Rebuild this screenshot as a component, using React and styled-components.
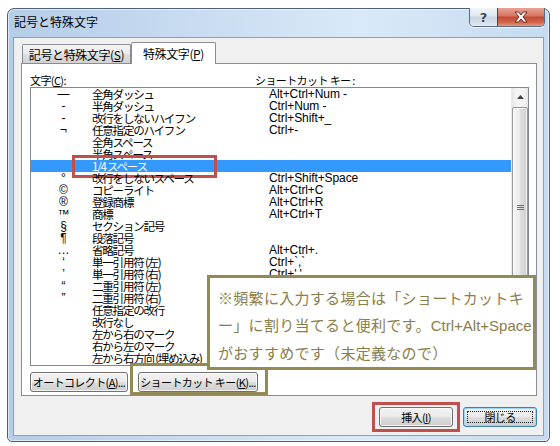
import React from 'react';
import styled, { createGlobalStyle } from 'styled-components';

const Global = createGlobalStyle`
  html, body { margin: 0; padding: 0; background: #fff; }
  body { font-family: "Liberation Sans", "Noto Sans CJK JP", sans-serif; color: #000; }
  * { box-sizing: border-box; }
`;

const JP = `"Noto Sans CJK JP", "Liberation Sans", sans-serif`;
const UI = `"Liberation Sans", "Noto Sans CJK JP", sans-serif`;

const Page = styled.div`
  position: relative;
  width: 560px;
  height: 446px;
  overflow: hidden;
  padding: 8px 0 0 7px;
`;

const Window = styled.div`
  width: 543px;
  height: 434px;
  border: 1px solid #4d6078;
  border-radius: 7px 7px 5px 5px;
  background: linear-gradient(to right, #b4cde8 0%, #c9dcf1 35%, #d9e9f8 65%, #c6dbf0 100%);
  box-shadow: inset 0 0 0 1px rgba(255, 255, 255, 0.55);
  display: flex;
  flex-direction: column;
  padding: 0 5px 5px 5px;
`;

const TitleBar = styled.div`
  height: 28px;
  display: flex;
  align-items: flex-start;
  flex-shrink: 0;
`;

const Title = styled.div`
  margin: 5px 0 0 1px;
  font-family: ${JP};
  font-size: 12px;
  line-height: 16px;
  color: #000;
`;

const CaptionGroup = styled.div`
  margin: -1px -1px 0 auto;
  display: flex;
  height: 19px;
  border: 1px solid #5a6a80;
  border-top: none;
  border-radius: 0 0 5px 5px;
  overflow: hidden;
  box-shadow: 0 1px 0 rgba(255, 255, 255, 0.7);
`;

const CaptionButton = styled.div`
  width: ${(p) => p.$w}px;
  height: 100%;
  display: flex;
  align-items: center;
  justify-content: center;
  background: ${(p) =>
    p.$close
      ? 'linear-gradient(#e8a493 0%, #d6735f 45%, #c04a32 50%, #d2664d 80%, #e49a7f 100%)'
      : 'linear-gradient(#f1f5fa 0%, #dfe7f1 45%, #c8d4e3 50%, #d4dfeb 80%, #e3ebf4 100%)'};
  border-left: ${(p) => (p.$close ? '1px solid #6b3a33' : 'none')};
  font-family: "DejaVu Sans", sans-serif;
  font-weight: bold;
  font-size: 13px;
  color: #3a4555;
  text-shadow: 0 0 2px #fff;
`;

const Client = styled.div`
  flex: 1;
  background: #f0f0f0;
  border: 1px solid #8f9fb4;
  padding: 4px 6px 8px 7px;
  display: flex;
  flex-direction: column;
`;

const TabStrip = styled.div`
  height: 21px;
  display: flex;
  align-items: flex-end;
  padding-left: 1px;
  flex-shrink: 0;
`;

const Tab = styled.div`
  position: relative;
  z-index: ${(p) => (p.$active ? 1 : 0)};
  width: ${(p) => p.$w}px;
  height: ${(p) => (p.$active ? 22 : 19)}px;
  margin-bottom: ${(p) => (p.$active ? -1 : 0)}px;
  border: 1px solid #898c95;
  border-bottom: none;
  border-radius: 2px 2px 0 0;
  background: ${(p) =>
    p.$active ? '#ffffff' : 'linear-gradient(#f4f4f4 0%, #ebebeb 50%, #dedede 52%, #d2d2d2 100%)'};
  display: flex;
  align-items: center;
  justify-content: center;
  font-family: ${JP};
  font-size: 12px;
  letter-spacing: -0.4px;
  line-height: 14px;
  padding-top: ${(p) => (p.$active ? 0 : 1)}px;
`;

const Key = styled.span`
  text-decoration: underline;
`;

const Panel = styled.div`
  width: 516px;
  height: 333px;
  border: 1px solid #898c95;
  background: #ffffff;
  padding: 10px 7px 0 8px;
  display: flex;
  flex-direction: column;
  flex-shrink: 0;
`;

const LabelRow = styled.div`
  height: 13px;
  display: flex;
  font-family: ${JP};
  font-size: 11px;
  letter-spacing: -0.6px;
  line-height: 12px;
`;

const Label = styled.div`
  width: ${(p) => (p.$w ? `${p.$w}px` : 'auto')};
`;

const ListBox = styled.div`
  height: 279px;
  border: 1px solid #828790;
  display: flex;
  background: #fff;
`;

const Rows = styled.div`
  flex: 1;
  overflow: hidden;
  position: relative;
`;

const Row = styled.div`
  position: relative;
  height: 12px;
  display: grid;
  grid-template-columns: 61px 177px 1fr;
  line-height: 12px;
  white-space: nowrap;
  background: ${(p) => (p.$sel ? '#3399ff' : 'transparent')};
  color: ${(p) => (p.$sel ? '#ffffff' : '#000000')};
`;

const Sym = styled.div`
  text-align: center;
  padding-left: 4px;
  font-family: ${UI};
  font-size: 12px;
`;

const Name = styled.div`
  font-family: ${JP};
  font-size: 11.5px;
  letter-spacing: -1.2px;
  line-height: 12px;
`;

const Shortcut = styled.div`
  font-family: ${UI};
  font-size: 12px;
  letter-spacing: -0.1px;
`;

const RowMark = styled.div`
  position: absolute;
  left: 41px;
  top: -5px;
  width: 145px;
  height: 23px;
  border: 3px solid #c0504d;
  pointer-events: none;
`;

const ScrollBar = styled.div`
  width: 17px;
  display: flex;
  flex-direction: column;
  background: linear-gradient(to right, #e6e6e6 0%, #f4f4f4 25%, #f4f4f4 75%, #e6e6e6 100%);
  border-left: 1px solid #eaeaea;
`;

const ArrowBtn = styled.div`
  height: 17px;
  display: flex;
  align-items: center;
  justify-content: center;
`;

const Thumb = styled.div`
  margin: 2px 0 0 0;
  height: 202px;
  border: 1px solid #979797;
  border-radius: 2px;
  background: linear-gradient(to right, #f5f5f5 0%, #ececec 45%, #dcdcdc 55%, #d0d0d0 100%);
  box-shadow: inset 0 0 0 1px rgba(255, 255, 255, 0.7);
  display: flex;
  align-items: center;
  justify-content: center;
`;

const PanelButtons = styled.div`
  margin-top: 6px;
  display: flex;
  gap: 10px;
`;

const Button = styled.div`
  position: relative;
  width: ${(p) => p.$w}px;
  height: 20px;
  border: 1px solid ${(p) => (p.$default ? '#3c7fb1' : '#707070')};
  border-radius: 3px;
  background: linear-gradient(#f2f2f2 0%, #ebebeb 48%, #dddddd 52%, #cfcfcf 100%);
  box-shadow: inset 0 0 0 1px ${(p) => (p.$default ? '#9ed5f5' : 'rgba(255,255,255,0.75)')};
  display: flex;
  align-items: center;
  justify-content: center;
  font-family: ${JP};
  font-size: 11px;
  letter-spacing: -0.6px;
  line-height: 14px;
`;

const FocusRect = styled.div`
  position: absolute;
  inset: 3px;
  border: 1px dotted #222;
  pointer-events: none;
`;

const ButtonMark = styled.div`
  position: absolute;
  inset: -6px -8px -6px -8px;
  border: 3px solid #c0504d;
  pointer-events: none;
`;

const DialogButtons = styled.div`
  margin-top: 11px;
  display: flex;
  justify-content: flex-end;
  gap: 10px;
`;

const Note = styled.div`
  position: absolute;
  z-index: 3;
  left: 207px;
  top: 275px;
  width: 329px;
  height: 95px;
  border: 3px solid #948a54;
  background: #fff;
  padding: 6px 0 0 8px;
  font-family: ${JP};
  font-size: 15px;
  letter-spacing: 0.3px;
  line-height: 27px;
  color: #8a7e4a;
  white-space: nowrap;
  overflow: hidden;
`;

const NoteLine = styled.div``;

const Latin = styled.span`
  font-family: ${UI};
  font-size: 15px;
  letter-spacing: 0;
`;

const OliveFrame = styled.div`
  position: absolute;
  z-index: 2;
  left: 130px;
  top: 363px;
  width: 138px;
  height: 32px;
  border: 3px solid #948a54;
  pointer-events: none;
`;

const rows = [
  ['—', '全角ダッシュ', 'Alt+Ctrl+Num -'],
  ['-', '半角ダッシュ', 'Ctrl+Num -'],
  ['-', '改行をしないハイフン', 'Ctrl+Shift+_'],
  ['¬', '任意指定のハイフン', 'Ctrl+-'],
  ['', '全角スペース', ''],
  ['', '半角スペース', ''],
  ['', '1/4 スペース', '', true],
  ['°', '改行をしないスペース', 'Ctrl+Shift+Space'],
  ['©', 'コピーライト', 'Alt+Ctrl+C'],
  ['®', '登録商標', 'Alt+Ctrl+R'],
  ['™', '商標', 'Alt+Ctrl+T'],
  ['§', 'セクション記号', ''],
  ['¶', '段落記号', ''],
  ['…', '省略記号', 'Alt+Ctrl+.'],
  ['‘', '単一引用符 (左)', 'Ctrl+`,`'],
  ['’', '単一引用符 (右)', "Ctrl+','"],
  ['“', '二重引用符 (左)', 'Ctrl+`,"'],
  ['”', '二重引用符 (右)', "Ctrl+',\""],
  ['', '任意指定の改行', ''],
  ['', '改行なし', ''],
  ['', '左から右のマーク', ''],
  ['', '右から左のマーク', ''],
  ['', '左から右方向 (埋め込み)', ''],
];

export default function App() {
  return (
    <>
      <Global />
      <Page>
        <Window>
          <TitleBar>
            <Title>記号と特殊文字</Title>
            <CaptionGroup>
              <CaptionButton $w={27}>?</CaptionButton>
              <CaptionButton $w={47} $close>
                <svg width="16" height="12" viewBox="0 0 16 12">
                  <path
                    d="M2 1 L5.5 1 L8 4 L10.5 1 L14 1 L10 6 L14 11 L10.5 11 L8 8 L5.5 11 L2 11 L6 6 Z"
                    fill="#ffffff"
                    stroke="#5b1f14"
                    strokeWidth="0.9"
                    strokeLinejoin="round"
                  />
                </svg>
              </CaptionButton>
            </CaptionGroup>
          </TitleBar>
          <Client>
            <TabStrip>
              <Tab $w={109}>
                記号と特殊文字(<Key>S</Key>)
              </Tab>
              <Tab $w={85} $active>
                特殊文字(<Key>P</Key>)
              </Tab>
            </TabStrip>
            <Panel>
              <LabelRow>
                <Label $w={225}>
                  文字(<Key>C</Key>):
                </Label>
                <Label>ショートカット キー :</Label>
              </LabelRow>
              <ListBox>
                <Rows>
                  {rows.map(([s, n, k, sel], i) => (
                    <Row key={i} $sel={sel}>
                      <Sym>{s}</Sym>
                      <Name>{n}</Name>
                      <Shortcut>{k}</Shortcut>
                      {sel && <RowMark />}
                    </Row>
                  ))}
                </Rows>
                <ScrollBar>
                  <ArrowBtn>
                    <svg width="7" height="4" viewBox="0 0 7 4">
                      <path d="M0 4 L3.5 0 L7 4 Z" fill="#404040" />
                    </svg>
                  </ArrowBtn>
                  <Thumb>
                    <svg width="7" height="6" viewBox="0 0 7 6">
                      <path d="M0 0.5 H7 M0 2.5 H7 M0 4.5 H7" stroke="#6d6d6d" strokeWidth="1" />
                    </svg>
                  </Thumb>
                </ScrollBar>
              </ListBox>
              <PanelButtons>
                <Button $w={98}>
                  オートコレクト(<Key>A</Key>)...
                </Button>
                <Button $w={120}>
                  ショートカット キー(<Key>K</Key>)...
                </Button>
              </PanelButtons>
            </Panel>
            <DialogButtons>
              <Button $w={74}>
                挿入(<Key>I</Key>)
                <ButtonMark />
              </Button>
              <Button $w={74} $default>
                閉じる
                <FocusRect />
              </Button>
            </DialogButtons>
          </Client>
        </Window>
        <OliveFrame />
        <Note>
          <NoteLine>※頻繁に入力する場合は「ショートカットキ</NoteLine>
          <NoteLine>
            ー」に割り当てると便利です。<Latin>Ctrl+Alt+Space</Latin>
          </NoteLine>
          <NoteLine>がおすすめです（未定義なので）</NoteLine>
        </Note>
      </Page>
    </>
  );
}
